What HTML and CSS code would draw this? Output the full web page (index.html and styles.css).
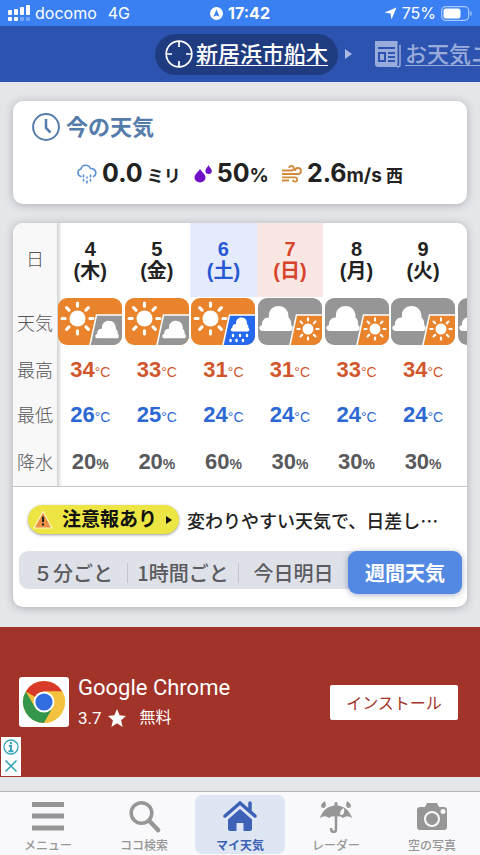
FILE: index.html
```html
<!DOCTYPE html>
<html lang="ja">
<head>
<meta charset="utf-8">
<meta name="viewport" content="width=device-width, initial-scale=1">
<title>新居浜市船木</title>
<link rel="stylesheet" href="styles.css">
</head>
<body>
<svg class="symbols" aria-hidden="true">
  <symbol id="sun" viewBox="0 0 34 34">
    <circle cx="17" cy="17" r="7.800" fill="#fff"/>
    <g stroke="#fff" stroke-width="3" stroke-linecap="round">
      <path d="M17 2v3M17 29v3M2 17h3M29 17h3M6.400 6.400l2.400 2.400M25.200 25.200l2.400 2.400M6.400 27.600l2.400-2.400M25.200 8.800l2.400-2.400"/>
    </g>
  </symbol>
  <symbol id="cloud" viewBox="0 0 34 27">
    <path d="M4 26C-1 26-.5 20.500 3 20C2.500 15.500 6 12 10 12.500C9 5 14 1 19.500 1C26 1 30 6 29.500 12.500C32 14.500 32.500 17.500 32 20C34.500 21 34.500 26 31 26Z" fill="#fff"/>
  </symbol>
  <symbol id="sun-cloud" viewBox="0 0 64 47">
    <rect width="64" height="47" rx="9" fill="#ea842c"/>
    <path d="M38 17H64V38A9 9 0 0 1 55 47H32Z" fill="#969696"/>
    <path d="M64 17H38.500L32 47" fill="none" stroke="#fff" stroke-width="1.500"/>
    <use href="#sun" x="2" y="3" width="35" height="35"/>
    <use href="#cloud" x="37" y="22" width="24" height="19"/>
  </symbol>
  <symbol id="sun-rain" viewBox="0 0 64 47">
    <rect width="64" height="47" rx="9" fill="#ea842c"/>
    <path d="M38 17H64V38A9 9 0 0 1 55 47H32Z" fill="#2668ee"/>
    <path d="M64 17H38.500L32 47" fill="none" stroke="#fff" stroke-width="1.500"/>
    <use href="#sun" x="2" y="3" width="35" height="35"/>
    <use href="#cloud" x="39" y="19" width="20" height="15"/>
    <path d="M42 37v1M49 37v1M56 37v1M39.500 42v1M45.500 42v1M52 42v1" stroke="#fff" stroke-width="2.400" stroke-linecap="round"/>
  </symbol>
  <symbol id="cloud-sun" viewBox="0 0 64 47">
    <rect width="64" height="47" rx="9" fill="#969696"/>
    <path d="M38 17H64V38A9 9 0 0 1 55 47H32Z" fill="#ea842c"/>
    <path d="M64 17H38.500L32 47" fill="none" stroke="#fff" stroke-width="1.500"/>
    <use href="#cloud" x="1" y="7" width="34" height="27"/>
    <use href="#sun" x="38" y="19" width="24" height="24"/>
  </symbol>
</svg>

<div class="status">
  <div class="status-side">
    <svg width="22" height="17" viewBox="0 0 22 17" aria-hidden="true"><g fill="#fff"><rect y="5" width="4" height="5" rx="1"/><rect x="6" y="4" width="4" height="6" rx="1"/><rect x="12" y="2" width="4" height="8" rx="1"/><rect x="18" width="4" height="10" rx="1"/><rect y="12" width="4" height="4" rx="1"/><rect x="6" y="12" width="4" height="4" rx="1"/><g opacity=".3"><rect x="12" y="12" width="4" height="4" rx="1"/><rect x="18" y="12" width="4" height="4" rx="1"/></g></g></svg>
    <span>docomo</span><span class="network">4G</span>
  </div>
  <div class="status-time">
    <svg width="13" height="13" viewBox="0 0 13 13" aria-hidden="true"><circle cx="6.500" cy="6.500" r="6.500" fill="#fff"/><path d="M6.500 2.500L9.600 9.800L6.500 8.400L3.400 9.800Z" fill="#3a80f2"/></svg>
    <b>17:42</b>
  </div>
  <div class="status-side status-right">
    <svg width="13" height="13" viewBox="0 0 13 13" aria-hidden="true"><path d="M12.500.5L7.500 12.500L6.500 6.500L.5 5.500Z" fill="#fff"/></svg>
    <span>75%</span>
    <svg width="31" height="15" viewBox="0 0 31 15" aria-hidden="true"><rect x=".7" y=".7" width="27" height="13.600" rx="4" fill="none" stroke="#a9c8fa" stroke-width="1.200"/><rect x="2.500" y="2.500" width="17" height="10" rx="2.500" fill="#fff"/><path d="M29.300 5v5q1.400-.5 1.400-2.500T29.300 5" fill="#a9c8fa"/></svg>
  </div>
</div>

<nav class="places">
  <a class="place current" href="#now">
    <svg width="28" height="28" viewBox="0 0 28 28" fill="none" stroke="#fff" stroke-width="1.700" aria-hidden="true"><circle cx="14" cy="14" r="12.800"/><path d="M14 1v6M14 21v6M1 14h6M21 14h6"/></svg>
    <span>新居浜市船木</span>
  </a>
  <svg class="next" width="7" height="10" viewBox="0 0 7 10" aria-hidden="true"><path d="M0 0L7 5L0 10Z" fill="#a9b9e4"/></svg>
  <a class="place news" href="#news">
    <svg width="28" height="28" viewBox="0 0 28 28" aria-hidden="true"><path d="M1 1H23.500V27H4Q1 27 1 24Z" fill="#98abda"/><path d="M26 5V25Q26 27 23 27" fill="none" stroke="#98abda" stroke-width="1.500"/><g fill="#2d53b1"><path d="M4 7h17v2H4zM4 12h8v10H4zM14 12h7v2h-7zM14 16h7v2h-7zM14 20h7v2h-7z"/></g><path d="M6 14h4v6H6z" fill="#98abda"/></svg>
    <span>お天気ニュース</span>
  </a>
</nav>

<main>
  <section class="card now" id="now">
    <h1>
      <svg width="28" height="28" viewBox="0 0 28 28" fill="none" stroke="#557cab" aria-hidden="true"><circle cx="14" cy="14" r="12.900" stroke-width="2"/><path d="M14 6v9l4.500 4.500" stroke-width="2.500"/></svg>
      今の天気
    </h1>
    <div class="readings">
      <div class="reading">
        <svg width="20" height="20" viewBox="0 0 20 20" fill="none" stroke="#5c91d8" stroke-width="1.600" stroke-linecap="round" aria-hidden="true"><path d="M4 12.500C0 11 0 5.500 4 5C5 0 12 0 13.500 4.500C19 4 20.500 10.500 16.500 12.500"/><path d="M6.500 11v2M6.500 15.500v1.500M10 13v1M10 17v2M13.500 11v2M13.500 15.500v1.500"/></svg>
        <span><strong>0.0</strong><span class="unit-ja"> ミリ</span></span>
      </div>
      <div class="reading">
        <svg width="18" height="18" viewBox="0 0 18 18" fill="#7011c8" aria-hidden="true"><path d="M6 4C8 7.500 11.500 9 11.500 12.500A5.500 5 0 0 1 .5 12.500C.5 9 4 7.500 6 4M14.500 0C15.500 2.500 17.800 3.800 17.800 6A3.200 3 0 0 1 11.400 6C11.400 3.800 13.500 2.500 14.500 0"/></svg>
        <span><strong>50</strong><span class="unit">%</span></span>
      </div>
      <div class="reading wind">
        <svg width="20" height="18" viewBox="0 0 20 18" fill="none" stroke="#d38a3d" stroke-width="1.800" aria-hidden="true"><path d="M0 5.500h9.500a2.300 2.300 0 1 0-2.300-2.500M0 9h16a3 3 0 1 0-3-3M0 12.300h13a2.200 2.200 0 1 1-2.200 2.500M0 15.500h7"/></svg>
        <span><strong>2.6</strong><span class="unit">m/s</span><span class="direction"> 西</span></span>
      </div>
    </div>
  </section>

  <section class="card forecast">
    <div class="table-scroll">
      <table>
        <thead>
          <tr class="days"><th class="label" scope="row">日</th><th scope="col">4<br>(木)</th><th scope="col">5<br>(金)</th><th scope="col" class="saturday">6<br>(土)</th><th scope="col" class="sunday">7<br>(日)</th><th scope="col">8<br>(月)</th><th scope="col">9<br>(火)</th><th scope="col"></th></tr>
        </thead>
        <tbody>
          <tr class="sky"><th class="label" scope="row">天気</th>
            <td><svg><use href="#sun-cloud"/></svg></td>
            <td><svg><use href="#sun-cloud"/></svg></td>
            <td><svg><use href="#sun-rain"/></svg></td>
            <td><svg><use href="#cloud-sun"/></svg></td>
            <td><svg><use href="#cloud-sun"/></svg></td>
            <td><svg><use href="#cloud-sun"/></svg></td>
            <td><svg><use href="#cloud-sun"/></svg></td></tr>
          <tr class="high"><th class="label" scope="row">最高</th><td>34<small>°C</small></td><td>33<small>°C</small></td><td>31<small>°C</small></td><td>31<small>°C</small></td><td>33<small>°C</small></td><td>34<small>°C</small></td><td></td></tr>
          <tr class="low"><th class="label" scope="row">最低</th><td>26<small>°C</small></td><td>25<small>°C</small></td><td>24<small>°C</small></td><td>24<small>°C</small></td><td>24<small>°C</small></td><td>24<small>°C</small></td><td></td></tr>
          <tr class="rain"><th class="label" scope="row">降水</th><td>20<small>%</small></td><td>20<small>%</small></td><td>60<small>%</small></td><td>30<small>%</small></td><td>30<small>%</small></td><td>30<small>%</small></td><td></td></tr>
        </tbody>
      </table>
    </div>
    <div class="notice">
      <button class="warning" type="button">
        <svg width="20" height="19" viewBox="0 0 20 19" aria-hidden="true"><path d="M10 1.500L19 18H1Z" fill="#ee9043" stroke="#fdf6c0" stroke-width="1.200" stroke-linejoin="round"/><path d="M10 6.500v5.500M10 13.500v2" stroke="#222" stroke-width="2"/></svg>
        <span>注意報あり</span>
        <svg width="6" height="8" viewBox="0 0 6 8" aria-hidden="true"><path d="M0 0L6 4L0 8Z" fill="#111"/></svg>
      </button>
      <p>変わりやすい天気で、日差し…</p>
    </div>
    <div class="periods">
      <button type="button">５分ごと</button>
      <button type="button">1時間ごと</button>
      <button type="button">今日明日</button>
      <button type="button" class="selected">週間天気</button>
    </div>
  </section>
</main>

<aside class="ad">
  <svg class="app-icon" width="50" height="50" viewBox="0 0 50 50" aria-hidden="true"><rect width="50" height="50" rx="3" fill="#fff"/><circle cx="25" cy="25" r="21" fill="#f4c23f"/><path d="M25 25L6.800 14.500A21 21 0 0 1 43.200 14.500H25Z" fill="#d93b2b"/><path d="M6.800 14.500A21 21 0 0 0 25 46L34.100 30.300L25 25L15.900 30.300Z" fill="#34964a"/><path d="M25 14.500H43.200A21 21 0 0 1 25 46L34.100 30.300Z" fill="#f4c23f"/><circle cx="25" cy="25" r="10.500" fill="#fff"/><circle cx="25" cy="25" r="8.600" fill="#2f6de0"/></svg>
  <div class="app">
    <div class="app-name">Google Chrome</div>
    <div class="app-info"><span>3.7</span><svg width="18" height="18" viewBox="0 0 18 18" aria-hidden="true"><path d="M9 0L11.600 6.300L18 6.900L13.100 11.200L14.600 18L9 14.300L3.400 18L4.900 11.200L0 6.900L6.400 6.300Z" fill="#fff"/></svg><span class="price">無料</span></div>
  </div>
  <button class="install" type="button">インストール</button>
  <div class="ad-controls">
    <button type="button" aria-label="広告について"><svg width="16" height="16" viewBox="0 0 16 16" fill="none" stroke="#35a4bb" aria-hidden="true"><circle cx="8" cy="8" r="7" stroke-width="1.300"/><path d="M8 3v2.200M6 7h2v5M5.500 12.200h5" stroke-width="1.900"/></svg></button>
    <button type="button" aria-label="閉じる"><svg width="16" height="16" viewBox="0 0 16 16" fill="none" stroke="#35a4bb" stroke-width="1.600" aria-hidden="true"><path d="M2.500 2.500l11 11M13.500 2.500l-11 11"/></svg></button>
  </div>
</aside>

<nav class="tabs">
  <a href="#menu"><svg width="34" height="34" viewBox="0 0 34 34" fill="currentColor" aria-hidden="true"><path d="M1 3h32v5H1zM1 14.500h32v5H1zM1 26.500h32v5H1z"/></svg>メニュー</a>
  <a href="#search"><svg width="34" height="34" viewBox="0 0 34 34" fill="none" stroke="currentColor" aria-hidden="true"><circle cx="14.500" cy="14" r="10.300" stroke-width="3.500"/><path d="M22 21.500L31 31" stroke-width="4.500" stroke-linecap="round"/></svg>ココ検索</a>
  <a href="#home" class="active"><svg width="34" height="34" viewBox="0 0 34 34" aria-hidden="true"><path d="M5 20.500L17 10L29 20.500V30Q29 32 27 32H20.500V24H13.500V32H7Q5 32 5 30Z" fill="currentColor"/><path d="M2 17L17 4L32 17M27 4v8" fill="none" stroke="currentColor" stroke-width="3.500" stroke-linecap="round"/></svg>マイ天気</a>
  <a href="#radar"><svg width="34" height="34" viewBox="0 0 34 34" aria-hidden="true"><path d="M1 19C3 12 9 7 15.500 6.500V4Q17 2 18.500 4V6.500C25 7 31 12 33 19Q28 15.500 24 19Q20.500 16 17 18.500Q13.500 16 10 19Q6 15.500 1 19Z" fill="currentColor"/><path d="M17 17V30Q17 33 14.500 33Q12 33 12 29" fill="none" stroke="currentColor" stroke-width="2.500"/><path d="M6 2C7.500 6 7 9 4.500 9C1 9 1 5 6 2M28 2C26.500 6 27 9 29.500 9C33 9 33 5 28 2" fill="currentColor"/><path d="M25 9C20.500 11.500 20 16 22.500 16Q26 15.500 25 9" fill="#f9f9fb"/></svg>レーダー</a>
  <a href="#photos"><svg width="34" height="34" viewBox="0 0 34 34" aria-hidden="true"><path d="M5 8H10L12 4H22L24 8H29Q32 8 32 11V28Q32 31 29 31H5Q2 31 2 28V11Q2 8 5 8Z" fill="currentColor"/><circle cx="17" cy="20" r="7" fill="currentColor" stroke="#f9f9fb" stroke-width="2"/><circle cx="28" cy="12.500" r="2.500" fill="#f9f9fb"/></svg>空の写真</a>
</nav>
</body>
</html>
```

FILE: styles.css
```css
* { box-sizing: border-box; }
body {
  margin: 0;
  min-height: 100vh;
  display: flex;
  flex-direction: column;
  overflow-x: hidden;
  background: #e5e6e9;
  color: #222;
  font-family: "Inter", "Noto Sans CJK JP", sans-serif;
  font-optical-sizing: none;
}
button { margin: 0; padding: 0; border: 0; background: none; color: inherit; font: inherit; cursor: pointer; }
a { color: inherit; text-decoration: none; }
svg { display: block; flex: none; }
.symbols { position: absolute; width: 0; height: 0; }

.status {
  display: grid;
  grid-template-columns: 1fr auto 1fr;
  align-items: center;
  height: 26px;
  padding: 0 8px;
  background: #3a80f2;
  color: #fff;
  font-size: 16px;
  line-height: 26px;
}
.status-side, .status-time { display: flex; align-items: center; gap: 5px; }
.network { margin-left: 6px; }
.status-right { justify-content: flex-end; }

.places {
  display: flex;
  align-items: center;
  height: 56px;
  padding-left: 155px;
  overflow: hidden;
  background: #2d53b1;
  color: #fff;
  white-space: nowrap;
}
.place { display: flex; align-items: center; flex: none; gap: 3px; height: 41px; font-size: 22px; font-weight: 500; line-height: 32px; }
.place span { text-decoration: underline; text-decoration-thickness: 1px; text-underline-offset: 3px; }
.current { padding: 0 10px; border-radius: 21px; background: #203c80; }
.next { margin: 0 22px 0 7px; }
.news { color: #98abda; }

main { display: flex; flex-direction: column; gap: 19px; padding: 19px 13px 20px; }
.card { border-radius: 10px; background: #fff; box-shadow: 0 1px 8px rgba(60, 65, 80, .35); }

.now { padding: 10px 19px 14px; }
h1 { display: flex; align-items: center; gap: 6px; margin: 0; color: #557cab; font-size: 22px; font-weight: 700; line-height: 32px; }
.readings { display: flex; justify-content: center; gap: 13px; height: 32px; margin-top: 15px; line-height: 32px; white-space: nowrap; }
.reading { display: flex; align-items: center; gap: 5px; font-weight: 700; }
.reading strong { font-size: 25px; font-weight: 700; }
.unit { font-size: 19px; }
.unit-ja, .direction { font-size: 17px; }

.forecast { padding-bottom: 18px; }
.table-scroll { overflow: hidden; border-bottom: 1px solid #c4c5c8; border-radius: 10px 10px 0 0; }
table { width: 510px; border-collapse: collapse; table-layout: fixed; font-family: "Liberation Sans", "Noto Sans CJK JP", sans-serif; }
th, td { padding: 0; text-align: center; vertical-align: middle; font-weight: 700; }
.label { width: 44px; background: #f8f8f9; color: #555; font-size: 18px; font-weight: 300; }
.label + * { background: linear-gradient(to right, rgba(0, 0, 0, .18), transparent 5px); }
.days { height: 74px; font-size: 20px; line-height: 22px; }
.saturday { background: #e3ebfc; color: #2857d6; }
.sunday { background: #f9e7e3; color: #d8432a; }
.sky { height: 49px; }
.sky svg { width: 64px; height: 47px; margin: 0 auto; }
.high, .low, .rain { font-size: 22px; line-height: 24px; }
.high > *, .low > *, .rain > * { padding-top: 4px; }
.high { height: 46px; }
.low { height: 44px; }
.rain { height: 50px; }
.high { color: #d2562b; }
.low { color: #2b68d3; }
.rain { color: #58595b; }
.high small, .low small { font-size: 14px; font-weight: 400; }
.rain small { font-size: 14px; }

.notice { display: flex; align-items: center; gap: 8px; padding: 18px 15px 17px; }
.warning {
  display: flex;
  align-items: center;
  flex: none;
  height: 29px;
  padding: 0 7px 0 5px;
  border-radius: 15px;
  background: #ece544;
  box-shadow: 0 1px 3px rgba(0, 0, 0, .4);
  color: #111;
  font-size: 19px;
  font-weight: 700;
  line-height: 28px;
}
.warning span { margin: 0 9px; }
.notice p { flex: 1; margin: 0; overflow: hidden; font-family: "Noto Sans CJK JP", sans-serif; font-size: 18px; font-weight: 500; line-height: 28px; white-space: nowrap; }

.periods { display: grid; grid-template-columns: 108fr 111fr 110fr 114fr; align-items: center; height: 38px; margin: 0 5px 0 6px; border-radius: 9px; background: #dee1e8; color: #5a5b5e; font-family: "Noto Sans CJK JP", sans-serif; font-size: 20px; font-weight: 500; line-height: 20px; white-space: nowrap; }
.periods button + button { border-left: 1px solid #c2c5cc; }
.periods button.selected { height: 43px; border: 0; border-radius: 9px; background: #5389e2; box-shadow: 0 1px 6px rgba(40, 60, 110, .4); color: #fff; font-weight: 700; }

.ad { position: relative; display: flex; align-items: center; gap: 9px; height: 150px; padding: 0 22px 0 19px; background: #a23329; color: #fff; font-family: "Roboto", "Noto Sans CJK JP", sans-serif; }
.app { flex: 1; }
.app-name { font-size: 22px; line-height: 28px; }
.app-info { display: flex; align-items: center; gap: 6px; margin-top: 4px; font-size: 17px; line-height: 24px; }
.price { margin-left: 8px; font-size: 16px; }
.install { width: 128px; height: 35px; border-radius: 2px; background: #fff; color: #a23329; font-size: 16px; }
.ad-controls { position: absolute; left: 1px; bottom: 1px; width: 20px; height: 39px; padding: 2px; display: flex; flex-direction: column; justify-content: space-between; background: #fff; }

.tabs { display: grid; grid-template-columns: repeat(5, 1fr); margin-top: auto; height: 64px; padding: 3px 0; border-top: 1px solid #b4b5b8; background: #f9f9fb; color: #969697; font-size: 12px; font-weight: 500; line-height: 16px; }
.tabs a { display: flex; flex-direction: column; align-items: center; gap: 5px; margin: 0 3px; padding-top: 4px; border-radius: 7px; }
.tabs .active { background: #dfe6f3; color: #3c61b7; font-weight: 700; }
```
